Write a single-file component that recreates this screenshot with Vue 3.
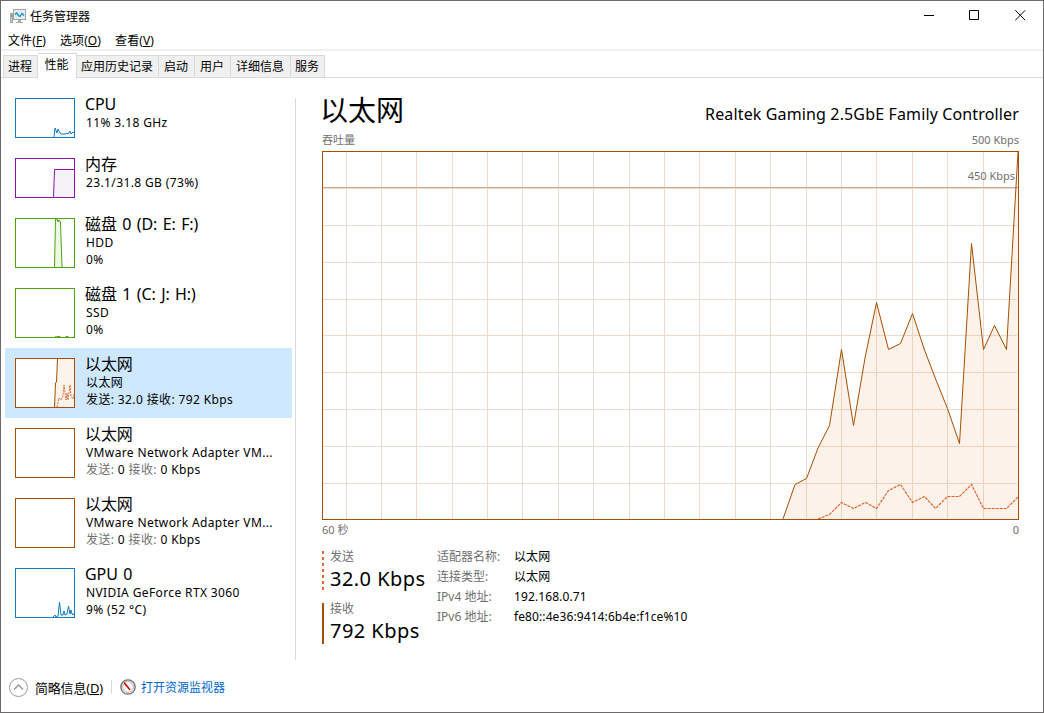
<template>
  <div class="window">
    <header class="titlebar">
      <svg class="app-icon" width="18" height="16" viewBox="0 0 18 16">
        <rect x="1.5" y="5.5" width="2" height="9" fill="#c9c9c9" stroke="#a6a6a6" />
        <rect x="2" y="7" width="1" height="2" fill="#3fae49" />
        <rect x="4.5" y="1.500" width="12" height="10" fill="#ececec" stroke="#a2a2a2" />
        <rect x="6" y="3" width="9" height="7" fill="#d3f0fc" />
        <path d="M6 6.500l1.500-1.500 2.500 3 1 .500L13 5.500l2 2" fill="none" stroke="#1c86c4" stroke-width="1.2" />
        <path d="M9 12h3v2h2v1H7v-1h2z" fill="#a9a9a9" />
      </svg>
      <span class="title">任务管理器</span>
      <div class="controls">
        <svg width="11" height="11" viewBox="0 0 11 11"><path d="M0 5.500h10" /></svg>
        <svg width="11" height="11" viewBox="0 0 11 11"><path d="M.5.5h9v9h-9z" /></svg>
        <svg width="11" height="11" viewBox="0 0 11 11"><path d="M.3.3l9.900 9.900M10.200.3L.3 10.200" /></svg>
      </div>
    </header>

    <nav class="menu">
      <span v-for="m in menus" :key="m.key" class="menu-item">{{ m.label }}(<u>{{ m.key }}</u>)</span>
    </nav>

    <div class="tabs">
      <div v-for="t in tabs" :key="t.name" class="tab" :class="[t.size, { active: t.name === '性能' }]">
        {{ t.name }}
      </div>
    </div>

    <main class="content">
      <aside class="sidebar">
        <div
          v-for="(d, i) in devices"
          :key="i"
          class="device"
          :class="[d.color, { short: d.h === 40, selected: i === 4 }]"
        >
          <svg class="thumb" width="60" :height="d.h">
            <rect class="thumb-bg" x="0.5" y="0.5" width="59" :height="d.h - 1" />
            <path v-if="d.line" class="area" :d="`${d.line}V${d.h}H39z`" />
            <path v-if="d.line" class="line" :d="d.line" />
            <path v-if="d.dashed" class="dashed" :d="d.dashed" />
            <rect class="frame" x="0.5" y="0.5" width="59" :height="d.h - 1" />
          </svg>
          <div class="info">
            <div class="name">{{ d.name }}</div>
            <div v-for="(l, j) in d.lines" :key="j" class="detail">
              <template v-if="Array.isArray(l)">
                <span class="dim">发送:</span> {{ l[0] }} <span class="dim">接收:</span> {{ l[1] }}
              </template>
              <template v-else>{{ l }}</template>
            </div>
          </div>
        </div>
      </aside>

      <section class="panel">
        <div class="panel-head">
          <h1>以太网</h1>
          <span class="adapter">Realtek Gaming 2.5GbE Family Controller</span>
        </div>
        <div class="caption top"><span>吞吐量</span><span>500 Kbps</span></div>
        <div class="chart">
          <svg width="697" height="369" viewBox="322 151 697 369">
            <g class="grid">
              <path v-for="x in gridX" :key="'x' + x" :d="`M${x + 0.5} 152V519`" />
              <path v-for="y in gridY" :key="'y' + y" :d="`M323 ${y + 0.5}H1017`" />
            </g>
            <path class="mark" d="M323 187.500H1018" />
            <polygon class="area" :points="`${received} 1018.5,519 783,519`" />
            <polyline class="line" :points="received" />
            <polyline class="dashed" :points="sent" />
            <rect class="frame" x="322.5" y="151.5" width="696" height="368" />
          </svg>
          <span class="chart-label">450 Kbps</span>
        </div>
        <div class="caption bottom"><span>60 秒</span><span>0</span></div>

        <div class="stats">
          <div class="rates">
            <div class="rate">
              <svg width="2" height="41"><path class="key-dashed" d="M1 0V39" /></svg>
              <div>
                <div class="rate-label">发送</div>
                <div class="rate-value">32.0 Kbps</div>
              </div>
            </div>
            <div class="rate">
              <svg width="2" height="41"><path class="key-solid" d="M1 0V41" /></svg>
              <div>
                <div class="rate-label">接收</div>
                <div class="rate-value">792 Kbps</div>
              </div>
            </div>
          </div>
          <dl class="props">
            <template v-for="p in adapterProps" :key="p[0]">
              <dt>{{ p[0] }}</dt>
              <dd>{{ p[1] }}</dd>
            </template>
          </dl>
        </div>
      </section>
    </main>

    <footer class="footer">
      <svg width="19" height="19" viewBox="0 0 19 19">
        <circle cx="9.500" cy="9.500" r="9" fill="#fff" stroke="#9b9b9b" />
        <path d="M5 11.500l4.500-4.500 4.500 4.500" fill="none" stroke="#9b9b9b" stroke-width="1.500" />
      </svg>
      <span class="brief">简略信息(<u>D</u>)</span>
      <i class="sep"></i>
      <svg width="16" height="16" viewBox="0 0 16 16">
        <circle cx="8" cy="8" r="7.200" fill="#e9e4dc" stroke="#6f6f6f" stroke-width="1.300" />
        <circle cx="8" cy="8" r="5.300" fill="#fafafa" stroke="#b9b3a8" stroke-width=".8" />
        <path d="M3.300 3l2 .5 5.500 7-1.500.8-4.800-5.500z" fill="#d81e1e" />
      </svg>
      <a class="link">打开资源监视器</a>
    </footer>
  </div>
</template>

<script setup>
const menus = [
  { label: '文件', key: 'F' },
  { label: '选项', key: 'O' },
  { label: '查看', key: 'V' },
]

const tabs = [
  { name: '进程', size: 'w35' },
  { name: '性能', size: 'w39' },
  { name: '应用历史记录', size: 'w82' },
  { name: '启动', size: 'w36' },
  { name: '用户', size: 'w36' },
  { name: '详细信息', size: 'w60' },
  { name: '服务', size: 'w34' },
]

const devices = [
  {
    name: 'CPU',
    color: 'blue',
    h: 40,
    lines: ['11% 3.18 GHz'],
    line: 'M39 39L40 30L42 35L43 31L45 35L46 36L50 36L52 35L53 36L55 33L56 36L58 34L60 35',
  },
  {
    name: '内存',
    color: 'purple',
    h: 40,
    lines: ['23.1/31.8 GB (73%)'],
    line: 'M38.500 40L39.500 11.500H60',
  },
  {
    name: '磁盘 0 (D: E: F:)',
    color: 'green',
    h: 50,
    lines: ['HDD', '0%'],
    line: 'M39.500 50L40.500 1L42 1L43 4L44 2L45.500 4L47 49',
  },
  {
    name: '磁盘 1 (C: J: H:)',
    color: 'green',
    h: 50,
    lines: ['SSD', '0%'],
    line: 'M40 49L41 48.500L42 49L43 48.500L45 48.500L46 49.500L50 49.500L51 48.500L53 48.500L54 49.500L58 49.500L60 48.500',
  },
  {
    name: '以太网',
    color: 'brown',
    h: 50,
    lines: ['以太网', '发送: 32.0 接收: 792 Kbps'],
    line: 'M39.500 50L40.500 25L41.500 24L42.500 0H60',
    dashed: 'M42 49L44 40L46 42L48 38L49 27L51 42L52 35L53 42L55 27L56 38L58 41L59 36',
  },
  { name: '以太网', color: 'brown', h: 50, lines: ['VMware Network Adapter VM...', ['0', '0 Kbps']] },
  { name: '以太网', color: 'brown', h: 50, lines: ['VMware Network Adapter VM...', ['0', '0 Kbps']] },
  {
    name: 'GPU 0',
    color: 'blue',
    h: 50,
    lines: ['NVIDIA GeForce RTX 3060', '9% (52 °C)'],
    line: 'M38 49L40 47L41 49L43 48L44.500 34L46 47L48 47L49 43L50 47L52 46L53.500 38L55 46L56 42L57 46L58 47L60 44',
  },
]

const adapterProps = [
  ['适配器名称:', '以太网'],
  ['连接类型:', '以太网'],
  ['IPv4 地址:', '192.168.0.71'],
  ['IPv6 地址:', 'fe80::4e36:9414:6b4e:f1ce%10'],
]

const gridX = Array.from({ length: 19 }, (_, i) => Math.floor(346 + i * 35.39))
const gridY = [188, 225, 262, 299, 335, 372, 409, 446, 483]

const received =
  '783,519 795,484.5 806.5,478.5 818,448 829.5,425.5 841.5,349.5 853.5,425.5 865,358 876.5,302.5 ' +
  '888.5,349.5 900.5,343.5 912.5,313.5 924.5,350 936,380 947.5,408.5 959.5,443.5 971.5,243.5 ' +
  '983.5,349.5 994.5,325.5 1006.5,349.5 1018,152'
const sent =
  '818,519 829.5,514.5 841.5,502.5 853.5,508.5 865.5,502.5 876.5,508.5 888.5,490.5 900.5,484.5 ' +
  '912.5,502.5 924.5,496.5 935.5,508.5 947.5,496.5 959.5,496.5 971.5,484.5 983.5,508.5 1006.5,508.5 1018.5,496.5'
</script>

<style>
body {
  margin: 0;
  overflow: hidden;
}
</style>

<style scoped>
.window {
  box-sizing: border-box;
  width: 1044px;
  height: 713px;
  display: flex;
  flex-direction: column;
  border: 1px solid #6d6b6b;
  background: #fff;
  color: #000;
  font-family: 'Noto Sans', 'Noto Sans CJK SC', sans-serif;
  font-size: 12px;
  white-space: nowrap;
}

.titlebar {
  height: 29px;
  display: flex;
  align-items: center;
  padding: 0 17px 0 8px;
}

.title {
  margin-left: 3px;
}

.controls {
  margin-left: auto;
  display: flex;
  gap: 34px;
}

.controls svg:last-child {
  margin-left: 1px;
}

.controls path {
  fill: none;
  stroke: #000;
}

.menu {
  height: 19px;
  line-height: 22px;
  display: flex;
  gap: 14px;
  padding-left: 7px;
  border-bottom: 2px solid #f0f0f0;
}

.menu-item {
  letter-spacing: 0.1px;
}

.tabs {
  height: 27px;
  box-sizing: border-box;
  display: flex;
  align-items: flex-end;
  padding-left: 2px;
  border-bottom: 1px solid #d9d9d9;
}

.tab {
  box-sizing: border-box;
  height: 22px;
  line-height: 22px;
  text-align: center;
  background: #f0f0f0;
  border: 1px solid #d9d9d9;
  border-width: 1px 1px 0 0;
  padding-right: 1px;
}

.tab:first-child {
  border-left-width: 1px;
}

.tab.active {
  height: 25px;
  margin-bottom: -1px;
  background: #fff;
}

.w34 { width: 34px; }
.w35 { width: 35px; }
.w36 { width: 36px; }
.w39 { width: 39px; }
.w60 { width: 60px; }
.w82 { width: 82px; }

.content {
  height: 582px;
  display: flex;
}

.sidebar {
  width: 290px;
  padding: 10px 0 0 4px;
}

.device {
  box-sizing: border-box;
  width: 287px;
  height: 70px;
  display: flex;
  padding: 10px 0 0 10px;
}

.device.short {
  height: 60px;
}

.device.selected {
  background: #cde8ff;
}

.info {
  margin-left: 10px;
  margin-top: -4px;
}

.name {
  font-size: 16px;
  line-height: 20px;
  letter-spacing: -0.1px;
  word-spacing: 1.4px;
}

.detail {
  line-height: 17px;
  margin-left: 1px;
  letter-spacing: 0.38px;
}

.dim {
  color: #707070;
}

.thumb-bg {
  fill: #fff;
}

.frame,
.line,
.dashed {
  fill: none;
}

.area {
  stroke: none;
}

.blue .frame,
.blue .line { stroke: #117dbb; }
.blue .area { fill: #f1f6fa; }
.purple .frame,
.purple .line { stroke: #8b12ae; }
.purple .area { fill: #f4f2f4; }
.green .frame,
.green .line { stroke: #4da60c; }
.green .area { fill: #eff7e9; }
.brown .frame,
.brown .line { stroke: #a74f01; }
.brown .area { fill: #fcf3eb; }

.brown .dashed {
  stroke: #dc6a3d;
  stroke-dasharray: 2 1;
}

.panel {
  margin-top: 20px;
  width: 724px;
  height: 562px;
  box-sizing: border-box;
  border-left: 1px solid #d9d9d9;
  padding-left: 25px;
}

.panel-head {
  display: flex;
  justify-content: space-between;
  height: 34px;
}

h1 {
  margin: 0 0 0 -1px;
  font-size: 28px;
  font-weight: 400;
  line-height: 24px;
}

.adapter {
  font-size: 16px;
  line-height: 32px;
  letter-spacing: 0.14px;
}

.caption {
  display: flex;
  justify-content: space-between;
  font-size: 11px;
  color: #707070;
}

.caption.top {
  height: 19px;
  line-height: 16px;
  padding-left: 1px;
}

.caption.bottom {
  height: 28px;
  line-height: 20px;
  padding-left: 1px;
}

.chart {
  position: relative;
  margin-left: 1px;
  height: 369px;
}

.chart svg {
  display: block;
}

.chart-label {
  position: absolute;
  right: 4px;
  top: 16px;
  line-height: 18px;
  font-size: 11px;
  color: #707070;
}

.grid path {
  stroke: #ecdccf;
}

.chart .mark {
  stroke: #d3a684;
}

.chart .area {
  fill: #d9731a;
  fill-opacity: 0.09;
}

.chart .line,
.chart .frame {
  stroke: #a74f01;
}

.chart .dashed {
  stroke: #e0602c;
  stroke-width: 1.15;
  stroke-dasharray: 3 1;
}

.stats {
  display: flex;
  padding-left: 1px;
}

.rates {
  width: 115px;
}

.rate {
  display: flex;
  height: 52px;
}

.rate svg {
  margin: 3px 6px 0 0;
}

.key-solid {
  stroke: #a74f01;
  stroke-width: 2;
}

.key-dashed {
  stroke: #dc6a3d;
  stroke-width: 2;
  stroke-dasharray: 3;
}

.rate-label {
  line-height: 17px;
  color: #707070;
}

.rate-value {
  font-size: 20px;
  line-height: 27px;
  letter-spacing: 0.45px;
}

.props {
  margin: -1px 0 0;
  display: grid;
  grid-template-columns: 77px auto;
  grid-auto-rows: 20px;
  line-height: 20px;
}

.props dt {
  color: #707070;
}

.props dd {
  margin: 0;
  letter-spacing: 0.1px;
}

.footer {
  flex: 1;
  display: flex;
  align-items: center;
  padding: 2px 0 0 8px;
}

.brief {
  margin-left: 7px;
  font-size: 13px;
  letter-spacing: -0.2px;
}

.sep {
  width: 1px;
  height: 14px;
  margin: 0 8px;
  background: #d9d9d9;
}

.link {
  margin-left: 5px;
  color: #0066cc;
}
</style>
